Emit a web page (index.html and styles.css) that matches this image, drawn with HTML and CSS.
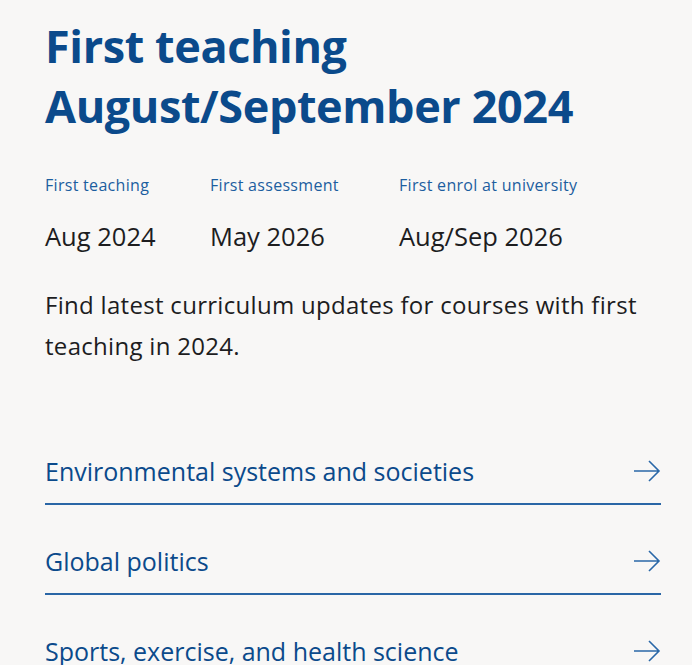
FILE: index.html
```html
<!DOCTYPE html>
<html lang="en">
<head>
<meta charset="utf-8">
<title>First teaching August/September 2024</title>
<link rel="stylesheet" href="styles.css">
</head>
<body>
<main class="panel">
  <h1 class="title">First teaching<br>August/September 2024</h1>
  <div class="dates">
    <div class="date">
      <div class="date-label">First teaching</div>
      <div class="date-value">Aug 2024</div>
    </div>
    <div class="date">
      <div class="date-label">First assessment</div>
      <div class="date-value">May 2026</div>
    </div>
    <div class="date">
      <div class="date-label">First enrol at university</div>
      <div class="date-value">Aug/Sep 2026</div>
    </div>
  </div>
  <p class="intro">Find latest curriculum updates for courses with first teaching in 2024.</p>
  <ul class="links">
    <li><a class="link" href="#"><span>Environmental systems and societies</span><svg class="arrow" viewBox="0 0 28 24" width="28" height="24"><path d="M1 12H26M16 2L26 12L16 22" fill="none" stroke="currentColor" stroke-width="1.6"/></svg></a></li>
    <li><a class="link" href="#"><span>Global politics</span><svg class="arrow" viewBox="0 0 28 24" width="28" height="24"><path d="M1 12H26M16 2L26 12L16 22" fill="none" stroke="currentColor" stroke-width="1.6"/></svg></a></li>
    <li><a class="link" href="#"><span>Sports, exercise, and health science</span><svg class="arrow" viewBox="0 0 28 24" width="28" height="24"><path d="M1 12H26M16 2L26 12L16 22" fill="none" stroke="currentColor" stroke-width="1.6"/></svg></a></li>
  </ul>
</main>
</body>
</html>
```
FILE: styles.css
```css
html, body {
  margin: 0;
  background: #f8f7f6;
}
body {
  font-family: "Open Sans", "Noto Sans", sans-serif;
  color: #1d1d1f;
}
.panel {
  padding: 16px 31px 0 45px;
}
.title {
  margin: 0;
  font-size: 45px;
  line-height: 60px;
  font-weight: 700;
  color: #0b4a8b;
  letter-spacing: -0.4px;
}
.dates {
  display: flex;
  margin-top: 39px;
}
.date:nth-child(1) { width: 165px; }
.date:nth-child(2) { width: 189px; }
.date-label {
  font-size: 16px;
  line-height: 20px;
  color: #1c5e9f;
  letter-spacing: 0.3px;
}
.date-value {
  margin-top: 26px;
  font-size: 25.5px;
  line-height: 30px;
  color: #1d1d1f;
}
.intro {
  margin: 33px 0 0;
  font-size: 24px;
  line-height: 41px;
  letter-spacing: 0.3px;
}
.links {
  list-style: none;
  margin: 73px 0 0;
  padding: 0;
}
.link {
  display: flex;
  justify-content: space-between;
  align-items: center;
  height: 64px;
  border-bottom: 2px solid #2a66a6;
  margin-bottom: 24px;
  text-decoration: none;
  color: #0b4a8b;
  font-size: 25px;
}
.arrow {
  color: #2a68a8;
}
```
